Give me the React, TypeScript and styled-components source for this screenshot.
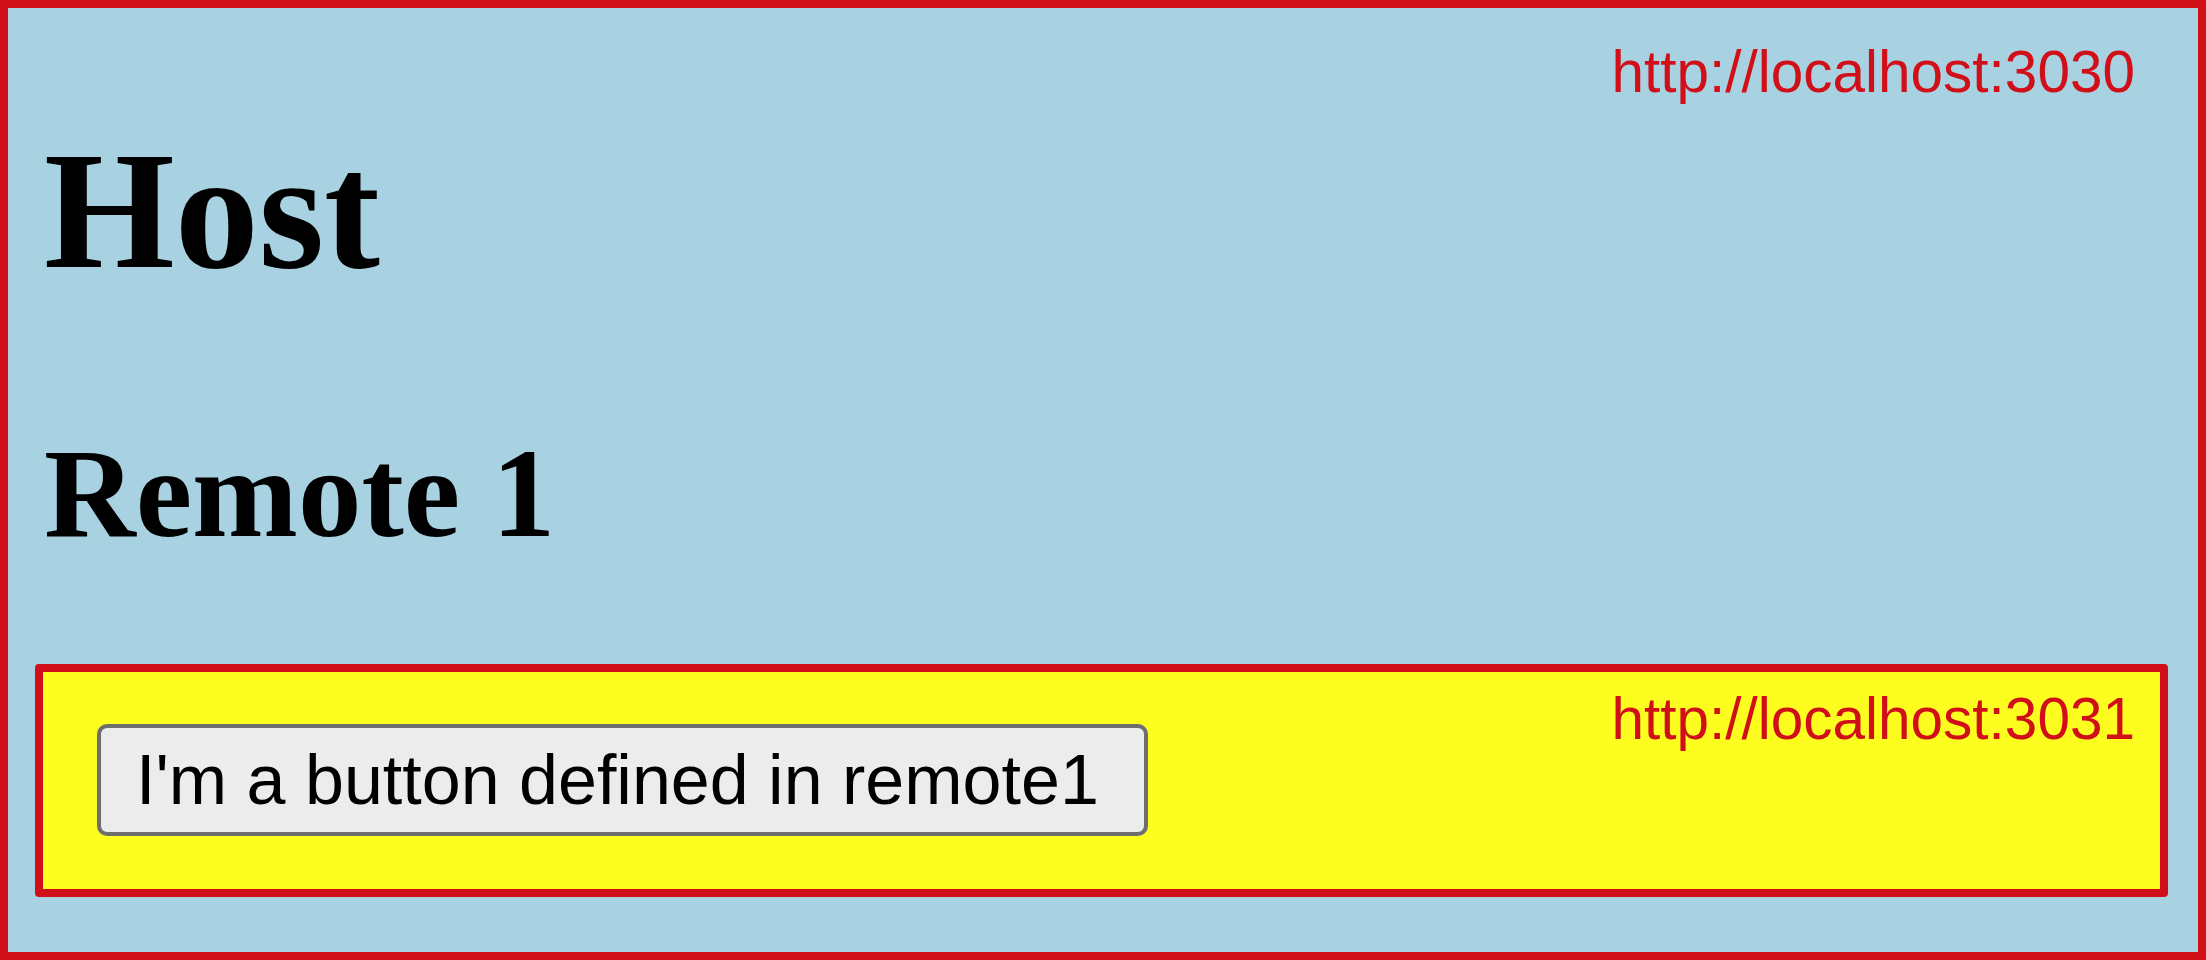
import React from "react";
import styled, { createGlobalStyle } from "styled-components";

const GlobalStyle = createGlobalStyle`
  html, body {
    margin: 0;
    padding: 0;
    background: #a8d1e1;
  }
  * { box-sizing: border-box; }
`;

const HostFrame = styled.div`
  position: relative;
  display: flex;
  flex-direction: column;
  width: 2206px;
  height: 960px;
  border: 8px solid #d10f18;
  background: #a8d1e1;
  overflow: hidden;
`;

const OriginLabel = styled.span<{ $top: number; $right: number }>`
  position: absolute;
  top: ${(p) => p.$top}px;
  right: ${(p) => p.$right}px;
  font-family: "Liberation Sans", Arial, Helvetica, sans-serif;
  font-size: 58.5px;
  line-height: 66px;
  color: #d10f18;
  white-space: nowrap;
`;

const Title = styled.h1`
  margin: 109px 0 0 36px;
  font-family: "Liberation Serif", "Times New Roman", serif;
  font-weight: 700;
  font-size: 168px;
  line-height: 186px;
  color: #000;
`;

const Subtitle = styled.h2`
  margin: 120px 0 0 36px;
  font-family: "Liberation Serif", "Times New Roman", serif;
  font-weight: 700;
  font-size: 127px;
  line-height: 141px;
  color: #000;
`;

const RemoteFrame = styled.div`
  position: relative;
  display: flex;
  align-items: flex-start;
  margin: 100px 30px 0 27px;
  padding: 52px 54px 53px;
  height: 233px;
  border: 8px solid #d10f18;
  border-radius: 4px;
  background: #fdfd20;
`;

const RemoteButton = styled.button`
  display: inline-flex;
  align-items: center;
  height: 112px;
  padding: 0 45px 0 35px;
  border: 4px solid #6e6e6e;
  border-radius: 10px;
  background: #ececec;
  font-family: "Liberation Sans", Arial, Helvetica, sans-serif;
  font-size: 70px;
  line-height: 1;
  color: #000;
  white-space: nowrap;
  cursor: pointer;
`;

export default function App() {
  return (
    <>
      <GlobalStyle />
      <HostFrame>
        <OriginLabel $top={31} $right={63}>http://localhost:3030</OriginLabel>
        <Title>Host</Title>
        <Subtitle>Remote 1</Subtitle>
        <RemoteFrame>
          <OriginLabel $top={14} $right={25}>http://localhost:3031</OriginLabel>
          <RemoteButton>I'm a button defined in remote1</RemoteButton>
        </RemoteFrame>
      </HostFrame>
    </>
  );
}
